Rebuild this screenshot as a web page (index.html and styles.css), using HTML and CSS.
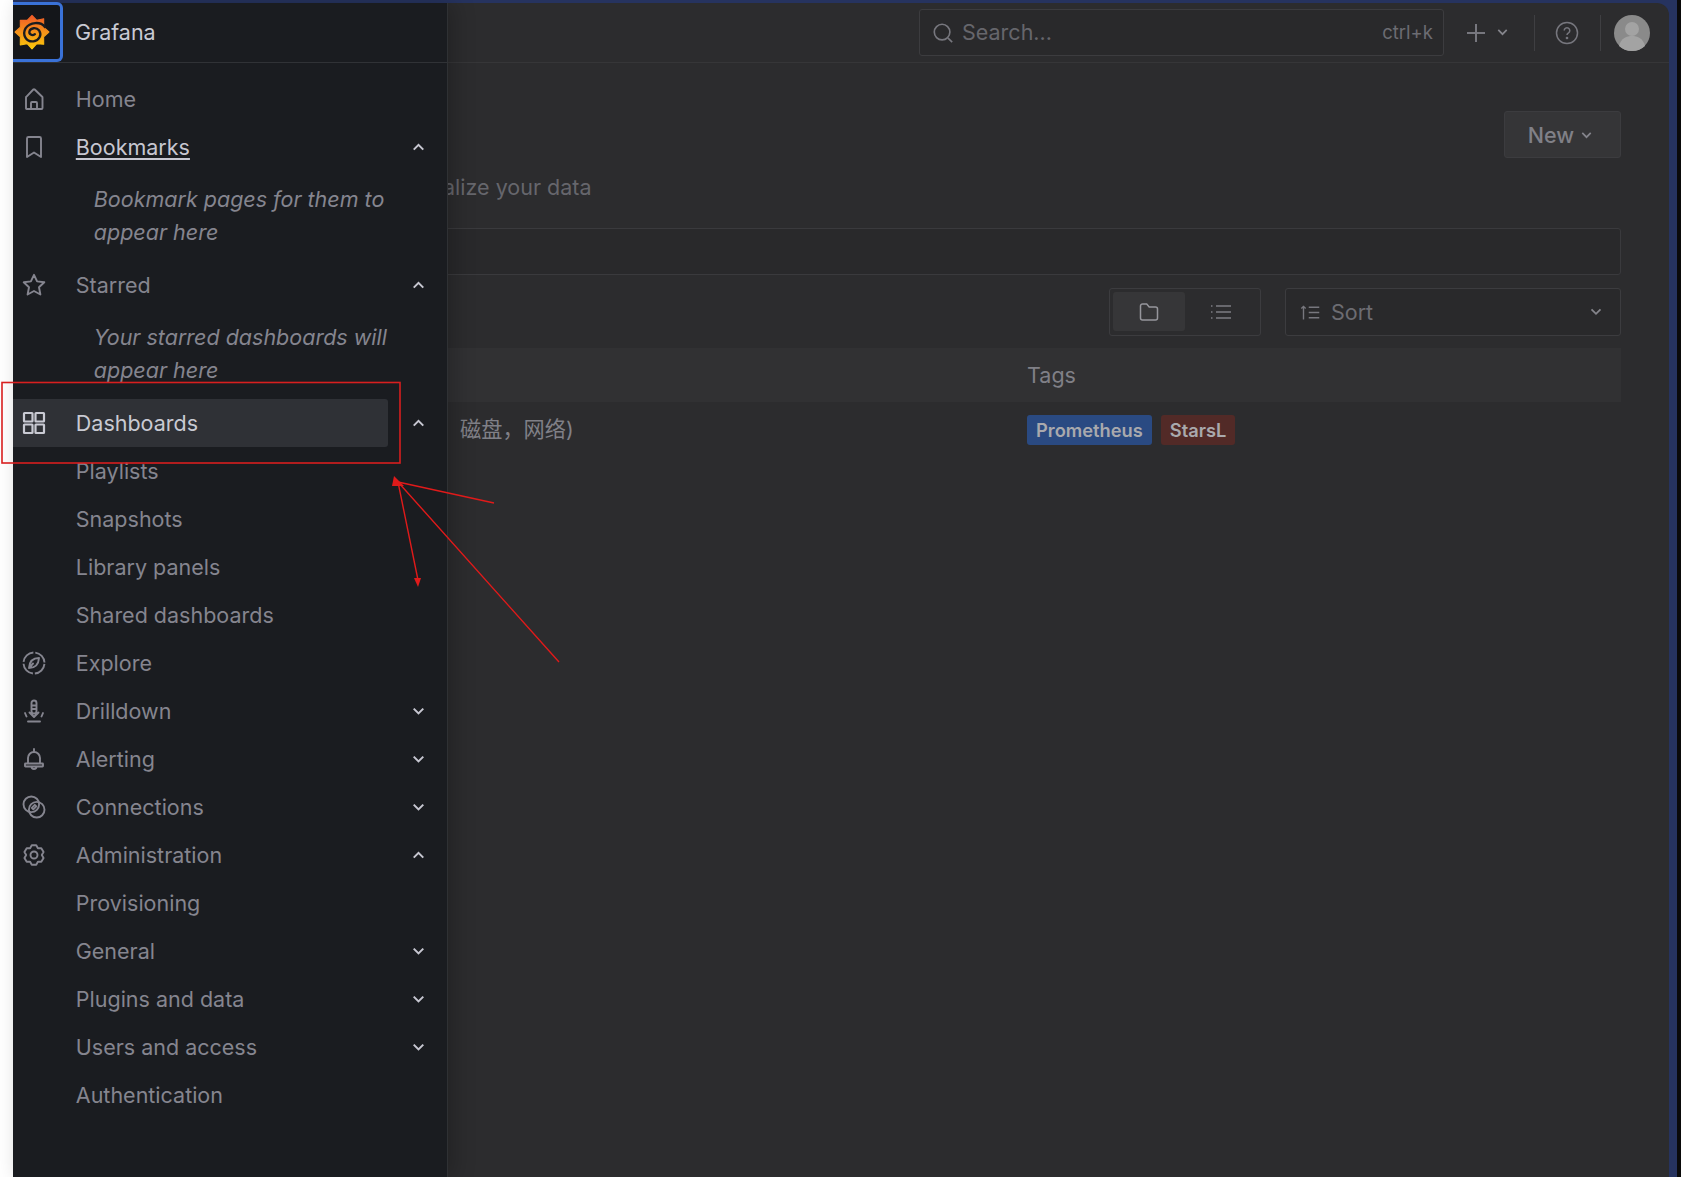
FILE: index.html
```html
<!DOCTYPE html>
<html lang="en">
<head>
<meta charset="utf-8">
<title>Grafana Dashboards</title>
<link rel="stylesheet" href="styles.css">
</head>
<body>
<svg class="defs" width="0" height="0" aria-hidden="true">
  <symbol id="chev-down" viewBox="0 0 16 16"><path d="M3.5 5.300l4.500 4.500l4.500-4.500"/></symbol>
  <symbol id="chev-up" viewBox="0 0 16 16"><path d="M3.500 10L8 5.500l4.500 4.500"/></symbol>
</svg>
<div class="frame">
  <main class="main">
    <header class="topbar">
      <div class="search">
        <svg class="search-icon" viewBox="0 0 24 24"><circle cx="11" cy="11" r="8.500"/><path d="M17.500 17.500L22 22"/></svg>
        <span class="search-text">Search...</span>
        <span class="search-key">ctrl+k</span>
      </div>
      <div class="add">
        <svg class="plus" viewBox="0 0 20 20"><path d="M10 1v18M1 10h18"/></svg>
        <svg class="mini-chev"><use href="#chev-down"/></svg>
      </div>
      <span class="vline vline-a"></span>
      <svg class="help" viewBox="0 0 24 24"><circle cx="12" cy="12" r="10.500"/><path d="M9.200 9.500a2.800 2.800 0 1 1 4.300 2.400c-1 .6-1.500 1.100-1.500 2.100"/><circle class="dot" cx="12" cy="17" r=".6"/></svg>
      <span class="vline vline-b"></span>
      <svg class="avatar" viewBox="0 0 36 36"><circle class="avatar-bg" cx="18" cy="18" r="18"/><circle class="avatar-fg" cx="18" cy="14" r="7"/><path class="avatar-fg" d="M5 31c2-8 8-10 13-10s11 2 13 10c-3 3-8 5-13 5s-10-2-13-5z"/></svg>
    </header>
    <section class="content">
      <div class="page-head">
        <p class="subtitle">alize your data</p>
        <button class="new-btn"><span class="new-label">New</span> <svg class="mini-chev"><use href="#chev-down"/></svg></button>
      </div>
      <div class="filter"></div>
      <div class="controls">
        <div class="toggle">
          <span class="toggle-item is-on">
            <svg class="tg-icon" viewBox="0 0 24 24"><path d="M3.500 6a2 2 0 0 1 2-2h4.200l2.500 3h6.300a2 2 0 0 1 2 2v9a2 2 0 0 1-2 2h-13a2 2 0 0 1-2-2z"/></svg>
          </span>
          <span class="toggle-item">
            <svg class="tg-icon" viewBox="0 0 24 24"><path d="M7 6h15M7 12h15M7 18h15M2 6h1.500M2 12h1.500M2 18h1.500"/></svg>
          </span>
        </div>
        <div class="sort">
          <svg class="sort-icon" viewBox="0 0 24 24"><path d="M4 20V5M1.500 7.500L4 5l2.500 2.500M10 6h12M10 12h12M10 18h12"/></svg>
          <span class="sort-text">Sort</span>
          <svg class="mini-chev sort-chev"><use href="#chev-down"/></svg>
        </div>
      </div>
      <div class="table-head"><span class="tags-col">Tags</span></div>
      <div class="table-row">
        <span class="row-name">磁盘，网络)</span>
        <div class="tags-col tag-list">
          <span class="tag tag-blue">Prometheus</span>
          <span class="tag tag-red">StarsL</span>
        </div>
      </div>
    </section>
  </main>

  <nav class="sidebar">
    <div class="brand">
      <span class="logo-box">
        <svg class="logo" viewBox="0 0 100 100">
          <defs><linearGradient id="gf" x1="0" y1="0" x2="0" y2="1"><stop offset="0" stop-color="#f05a28"/><stop offset="1" stop-color="#fbca0a"/></linearGradient></defs>
          <path class="logo-sun" d="M50 4L63.400 17.700L82.500 13L82.300 36.600L97 50L82.300 63.400L82.500 84L63.400 82.300L50 97L36.600 82.300L17.500 86L17.700 63.400L3 50L17.700 36.600L17.500 17.500L36.600 17.700z"/>
          <path class="logo-swirl" d="M86 36C74 20 44 22 32 40C22 58 34 78 54 76C70 74 78 58 70 46C62 36 46 38 43 48C41 56 50 62 58 56"/>
        </svg>
      </span>
      <span class="brand-name">Grafana</span>
    </div>
    <div class="menu">
      <div class="row">
        <a class="link"><svg class="ico" viewBox="0 0 24 24"><path d="M4.500 22h15a1 1 0 0 0 1-1V10.500a1 1 0 0 0-.3-.7l-7.500-7.300a1 1 0 0 0-1.400 0L4.300 9.800a1 1 0 0 0-.3.700V21a1 1 0 0 0 .5 1zM9 22v-6a1 1 0 0 1 1-1h4a1 1 0 0 1 1 1v6"/></svg><span>Home</span></a>
      </div>
      <div class="row">
        <a class="link is-bright"><svg class="ico" viewBox="0 0 24 24"><path class="ico-dim" d="M5 3.500a1.500 1.500 0 0 1 1.500-1.500h11A1.500 1.500 0 0 1 19 3.500V22l-7-4.500L5 22z"/></svg><span class="underlined">Bookmarks</span></a>
        <svg class="chev"><use href="#chev-up"/></svg>
      </div>
      <p class="empty">Bookmark pages for them to appear here</p>
      <div class="row">
        <a class="link"><svg class="ico" viewBox="0 0 24 24"><path d="M12 1.800l3.100 6.600 7.200.9-5.300 5 1.400 7.200L12 18l-6.400 3.500L7 14.300l-5.300-5 7.200-.9z"/></svg><span>Starred</span></a>
        <svg class="chev"><use href="#chev-up"/></svg>
      </div>
      <p class="empty">Your starred dashboards will appear here</p>
      <div class="row">
        <a class="link is-active"><svg class="ico" viewBox="0 0 24 24"><rect x="2" y="2" width="8.500" height="8.500" rx=".5"/><rect x="13.500" y="2" width="8.500" height="8.500" rx=".5"/><rect x="2" y="13.500" width="8.500" height="8.500" rx=".5"/><rect x="13.500" y="13.500" width="8.500" height="8.500" rx=".5"/></svg><span>Dashboards</span></a>
        <svg class="chev"><use href="#chev-up"/></svg>
      </div>
      <div class="row"><a class="link"><span class="ico-gap"></span><span>Playlists</span></a></div>
      <div class="row"><a class="link"><span class="ico-gap"></span><span>Snapshots</span></a></div>
      <div class="row"><a class="link"><span class="ico-gap"></span><span>Library panels</span></a></div>
      <div class="row"><a class="link"><span class="ico-gap"></span><span>Shared dashboards</span></a></div>
      <div class="row">
        <a class="link"><svg class="ico" viewBox="0 0 24 24"><circle cx="12" cy="12" r="10.500" stroke-dasharray="14.500 2" stroke-dashoffset="-1" stroke-linecap="butt"/><path d="M17 7c-5 0-9.500 2.500-10 10 5 0 9.500-2.500 10-10zM7 17l4-4.500"/></svg><span>Explore</span></a>
      </div>
      <div class="row">
        <a class="link"><svg class="ico" viewBox="0 0 24 24"><path d="M9.500 4a2.500 2.500 0 0 1 5 0v8a2.500 2.500 0 0 1-5 0zM9.500 6.500h5M9.500 10h5M7.500 13.500L12 18l4.500-4.500M3 14l1.500 3.500M21 14l-1.500 3.500M6 22.500h12"/></svg><span>Drilldown</span></a>
        <svg class="chev"><use href="#chev-down"/></svg>
      </div>
      <div class="row">
        <a class="link"><svg class="ico" viewBox="0 0 24 24"><path d="M12 2v2M6 16v-5a6 6 0 0 1 12 0v5M3.500 16.500h17a.500.500 0 0 1 .5.500v2a.500.500 0 0 1-.5.500h-17a.500.500 0 0 1-.5-.500v-2a.500.500 0 0 1 .5-.500zM9.500 19.500a2.500 2.500 0 0 0 5 0"/></svg><span>Alerting</span></a>
        <svg class="chev"><use href="#chev-down"/></svg>
      </div>
      <div class="row">
        <a class="link"><svg class="ico" viewBox="0 0 24 24"><circle cx="9.300" cy="9.300" r="7.800"/><circle cx="14.700" cy="14.700" r="7.800"/><path d="M9.800 12.800l3-3 1.500 1.500-3 3z"/></svg><span>Connections</span></a>
        <svg class="chev"><use href="#chev-down"/></svg>
      </div>
      <div class="row">
        <a class="link"><svg class="ico" viewBox="0 0 24 24"><path d="M9.750 2.260H14.250L15.900 5.250L19.310 5.180L21.560 9.080L19.800 12L21.560 14.920L19.310 18.820L15.900 18.750L14.250 21.740H9.750L8.100 18.750L4.690 18.820L2.440 14.920L4.200 12L2.440 9.080L4.690 5.180L8.100 5.250z"/><circle cx="12" cy="12" r="3.500"/></svg><span>Administration</span></a>
        <svg class="chev"><use href="#chev-up"/></svg>
      </div>
      <div class="row"><a class="link"><span class="ico-gap"></span><span>Provisioning</span></a></div>
      <div class="row">
        <a class="link"><span class="ico-gap"></span><span>General</span></a>
        <svg class="chev"><use href="#chev-down"/></svg>
      </div>
      <div class="row">
        <a class="link"><span class="ico-gap"></span><span>Plugins and data</span></a>
        <svg class="chev"><use href="#chev-down"/></svg>
      </div>
      <div class="row">
        <a class="link"><span class="ico-gap"></span><span>Users and access</span></a>
        <svg class="chev"><use href="#chev-down"/></svg>
      </div>
      <div class="row"><a class="link"><span class="ico-gap"></span><span>Authentication</span></a></div>
    </div>
  </nav>
</div>

<svg class="marks" viewBox="0 0 1681 1177" width="1681" height="1177">
  <rect class="mark-line" x="2" y="382.500" width="398" height="80.500"/>
  <path class="mark-line thin" d="M494 503L398 482M559 662L398 482M398 482L418 580"/>
  <path class="mark-head" d="M394 476L404 486L392 486z"/>
  <path class="mark-head" d="M414 578L421 578L418 587z"/>
</svg>
</body>
</html>
```

FILE: styles.css
```css
* { box-sizing: border-box; }
html, body { margin: 0; height: 100%; }
body {
  background: #fff;
  padding-left: 13px;
  font-family: Inter, "Noto Sans CJK SC", "Liberation Sans", sans-serif;
  font-size: 21.500px;
  overflow: hidden;
  position: relative;
}
.defs { position: absolute; }

.frame {
  position: relative;
  height: 1177px;
  background: #26335f;
  padding: 3px 8px 0 0;
  border-right: 4px solid #0a0a0a;
}
.main {
  height: 100%;
  background: #2c2c2e;
  border-radius: 0 12px 0 0;
  display: flex;
  flex-direction: column;
}

/* top bar */
.topbar {
  height: 60px;
  flex: none;
  border-bottom: 1px solid #363638;
  display: flex;
  align-items: center;
  justify-content: flex-end;
  padding-right: 19px;
  color: #75757c;
}
.search {
  width: 525px;
  height: 47px;
  margin-right: 22px;
  border: 1px solid #3c3c3f;
  border-radius: 3px;
  background: #29292b;
  display: flex;
  align-items: center;
  padding: 0 10px 2px 12px;
}
.search-icon { width: 22px; height: 22px; fill: none; stroke: #77777e; stroke-width: 1.800; margin: 2px 8px 0 0; }
.search-text { flex: 1; color: #66666c; }
.search-key { font-size: 18.500px; color: #6c6c72; }
.add { display: flex; align-items: center; gap: 9px; margin-right: 24px; }
.plus { width: 20px; height: 20px; fill: none; stroke: #77777e; stroke-width: 2; }
.mini-chev { width: 15px; height: 15px; fill: none; stroke: #85858c; stroke-width: 1.800; }
.vline { width: 1px; height: 36px; background: #3f3f42; }
.vline-a { margin-right: 20px; }
.vline-b { margin: 0 13px 0 21px; }
.help { width: 24px; height: 24px; fill: none; stroke: #77777e; stroke-width: 1.500; }
.help .dot { fill: #77777e; }
.avatar { width: 36px; height: 36px; }
.avatar-bg { fill: #8a8a8a; }
.avatar-fg { fill: #a3a3a3; }

/* page */
.content { flex: 1; padding: 48px 48px 0 48px; }
.page-head { height: 117px; display: flex; justify-content: space-between; align-items: flex-start; }
.subtitle { margin: 60px 0 0 382px; line-height: 33px; color: #66666c; }
.new-btn {
  width: 117px;
  height: 47px;
  padding: 1px 0 0;
  display: flex;
  align-items: center;
  justify-content: center;
  gap: 5px;
  font: 500 21.500px Inter, sans-serif;
  color: #808087;
  background: #353537;
  border: 1px solid #3c3c3f;
  border-radius: 3px;
}
.new-btn .mini-chev { margin-right: 3px; }
.filter { height: 47px; background: #29292b; border: 1px solid #3a3a3d; border-radius: 3px; }
.controls { margin-top: 13px; display: flex; justify-content: flex-end; gap: 24px; }
.toggle {
  width: 152px;
  height: 48px;
  border: 1px solid #3c3c3f;
  border-radius: 3px;
  padding: 3px;
  display: flex;
}
.toggle-item { width: 72px; height: 39px; display: flex; align-items: center; justify-content: center; border-radius: 3px; }
.is-on { background: #363638; }
.tg-icon { width: 24px; height: 24px; fill: none; stroke: #7c7c83; stroke-width: 1.500; }
.is-on .tg-icon { stroke: #96969c; }
.sort {
  width: 336px;
  height: 48px;
  background: #29292b;
  border: 1px solid #3c3c3f;
  border-radius: 3px;
  display: flex;
  align-items: center;
  padding: 0 16px 0 14px;
  color: #6c6c72;
}
.sort-icon { width: 21px; height: 21px; fill: none; stroke: #77777e; stroke-width: 1.600; margin-right: 10px; }
.sort-text { flex: 1; }
.sort-chev { width: 16px; height: 16px; }

.table-head, .table-row { display: flex; align-items: center; height: 54px; }
.table-head { margin-top: 12px; background: #313133; color: #808087; justify-content: flex-end; }
.tags-col { width: 594px; }
.row-name { flex: 1; padding: 0 0 4px 399px; font-size: 21.200px; color: #808087; }
.tag-list { display: flex; gap: 9px; margin-top: 2px; }
.tag {
  height: 30px;
  padding: 0 9px;
  font-size: 18.300px;
  font-weight: 600;
  line-height: 30px;
  border-radius: 3px;
  color: #a9a9ad;
}
.tag-blue { background: #2a4a82; }
.tag-red { background: #522a27; }

/* sidebar */
.sidebar {
  position: absolute;
  left: 0;
  top: 3px;
  bottom: 0;
  width: 435px;
  background: #1a1c20;
  border-right: 1px solid #2f3134;
  box-shadow: 6px 0 20px rgba(0, 0, 0, .22);
  color: #85858f;
}
.brand { height: 60px; display: flex; align-items: center; border-bottom: 1px solid #303236; }
.logo-box {
  width: 50px;
  height: 60px;
  margin-bottom: 1px;
  display: flex;
  align-items: center;
  justify-content: flex-end;
  padding-right: 11px;
  border: 3px solid #3a72d8;
  border-left: 0;
  border-radius: 0 6px 6px 0;
  background: #14161a;
}
.logo { width: 36px; height: 38px; flex: none; margin-right: -1px; }
.logo-sun { fill: url(#gf); stroke: url(#gf); stroke-width: 3; stroke-linejoin: round; }
.logo-swirl { fill: none; stroke: #1a1c20; stroke-width: 6.500; stroke-linecap: round; }
.brand-name { margin: 0 0 2px 12px; color: #c9cad3; }
.menu { padding-top: 12px; }
.row { height: 48px; display: flex; align-items: center; }
.link {
  width: 375px;
  height: 48px;
  display: flex;
  align-items: center;
  padding-left: 9px;
  border-radius: 0 3px 3px 0;
}
.ico, .ico-gap { width: 24px; height: 24px; flex: none; margin-right: 29.800px; }
.ico { fill: none; stroke: #85858f; stroke-width: 1.900; stroke-linejoin: round; stroke-linecap: round; }
.ico-dim { stroke: #85858f; }
.is-bright { color: #c7c7d1; }
.underlined { text-decoration: underline; text-underline-offset: 3px; text-decoration-thickness: 1.500px; }
.is-active { background: #2f3136; color: #c9cad3; }
.is-active .ico { stroke: #c9cad3; stroke-width: 2.200; }
.chev { width: 17px; height: 17px; margin-left: 21.500px; fill: none; stroke: #c7c7d1; stroke-width: 1.900; }
.empty {
  margin: 0;
  height: 90px;
  padding: 12px 40px 0 80.800px;
  font-style: italic;
  line-height: 33px;
  color: #85858f;
}

/* annotations */
.marks { position: absolute; left: 0; top: 0; pointer-events: none; }
.mark-line { fill: none; stroke: #d81f1f; stroke-width: 1.600; }
.mark-line.thin { stroke: #e01a1a; stroke-width: 1.400; }
.mark-head { fill: #e01a1a; }
```
